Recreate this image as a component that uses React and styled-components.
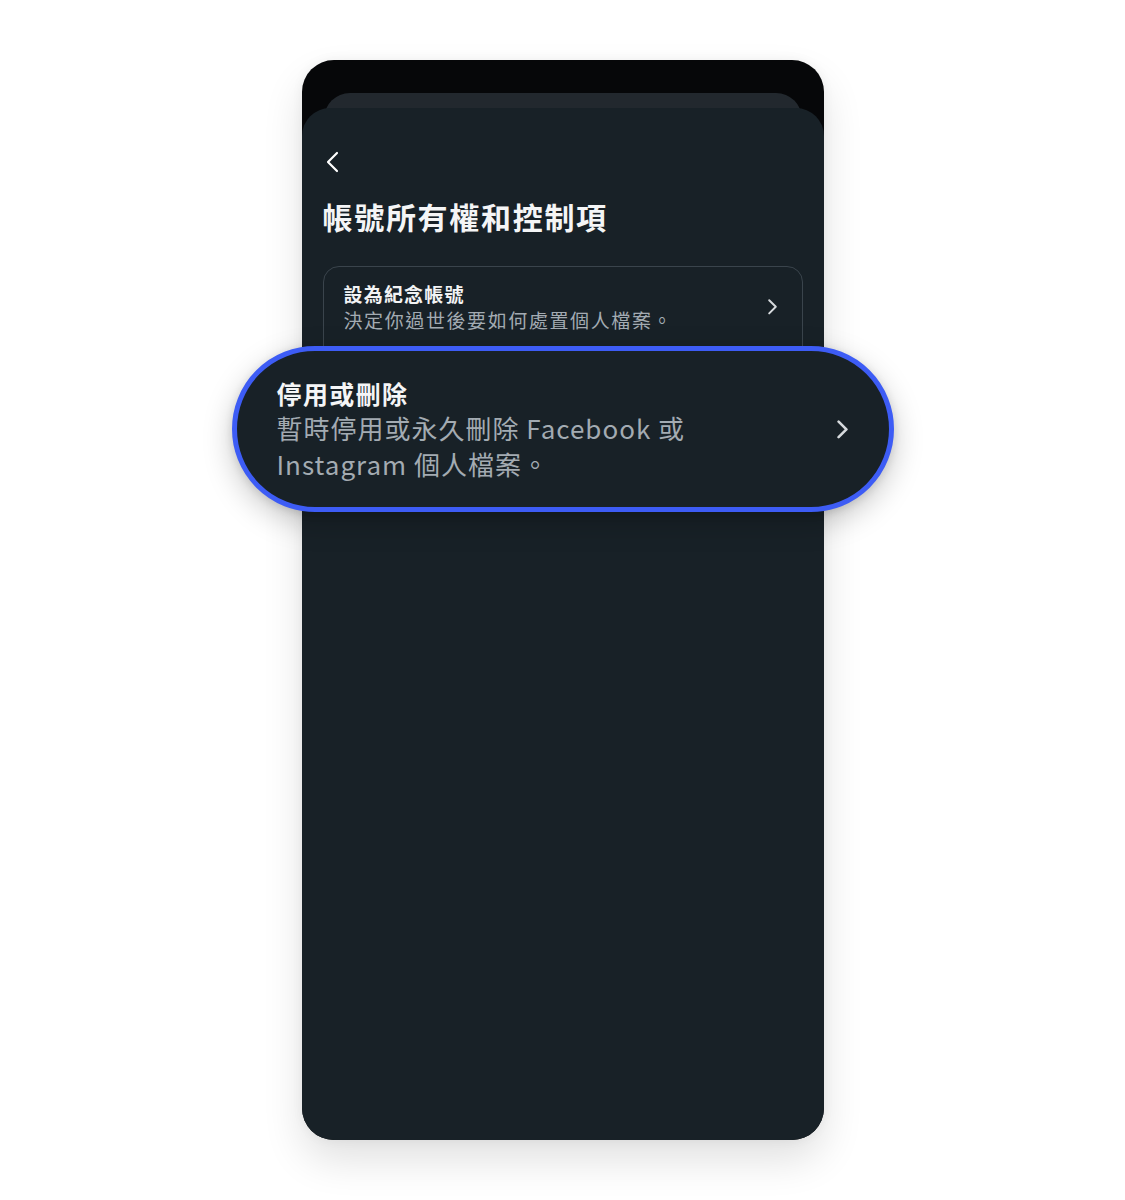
import React from "react";
import styled, { createGlobalStyle } from "styled-components";

const Global = createGlobalStyle`
  html, body { margin: 0; padding: 0; background: #ffffff; }
  body { font-family: "Noto Sans CJK TC", "Noto Sans", sans-serif; }
`;

const Page = styled.div`
  width: 1125px;
  height: 1200px;
  display: flex;
  justify-content: center;
  padding-top: 60px;
  box-sizing: border-box;
`;

const Stage = styled.div`
  position: relative;
  width: 522px;
  height: 1080px;
`;

const Phone = styled.div`
  width: 100%;
  height: 100%;
  background: #060709;
  border-radius: 32px;
  overflow: hidden;
  display: flex;
  flex-direction: column;
  padding-top: 33px;
  box-sizing: border-box;
  box-shadow: 0 20px 40px rgba(0, 0, 0, 0.12), 0 0 12px rgba(0, 0, 0, 0.05);
`;

const BackSheet = styled.div`
  margin: 0 22px;
  height: 40px;
  flex: none;
  background: #22282e;
  border-radius: 26px 26px 0 0;
`;

const Sheet = styled.div`
  margin-top: -25px;
  flex: 1;
  background: #182127;
  border-radius: 28px 28px 0 0;
  padding: 0 21px;
  display: flex;
  flex-direction: column;
`;

const BackButton = styled.div`
  margin-top: 43px;
  margin-left: 1px;
  width: 18px;
  height: 22px;
  display: flex;
  align-items: center;
  color: #ffffff;
`;

const Title = styled.h1`
  margin: 22px 0 0 0;
  font-size: 30px;
  line-height: 42px;
  font-weight: 700;
  color: #f4f5f6;
  letter-spacing: 1.7px;
`;

const Card = styled.div`
  margin-top: 29px;
  border: 1px solid #3a444c;
  border-radius: 16px;
  overflow: hidden;
`;

const Row = styled.div`
  display: flex;
  align-items: center;
  padding: 14px 24px 13px 20px;
  gap: 12px;
`;

const RowText = styled.div`
  flex: 1;
  display: flex;
  flex-direction: column;
`;

const RowTitle = styled.div`
  font-size: 19px;
  line-height: 26px;
  font-weight: 700;
  color: #f2f3f4;
  letter-spacing: 1.2px;
`;

const RowSub = styled.div`
  font-size: 19px;
  line-height: 26px;
  color: #a3abb2;
  letter-spacing: 1.6px;
`;

const Callout = styled.div`
  position: absolute;
  left: -70px;
  top: 286px;
  width: 662px;
  height: 166px;
  box-sizing: border-box;
  border: 5px solid #3d5cf5;
  border-radius: 83px;
  background: #182127;
  display: flex;
  align-items: center;
  padding: 0 40px 0 40px;
  gap: 16px;
  box-shadow: 0 10px 30px rgba(0, 0, 0, 0.22), 0 2px 8px rgba(0, 0, 0, 0.12);
`;

const CalloutText = styled.div`
  flex: 1;
  display: flex;
  flex-direction: column;
`;

const CalloutTitle = styled.div`
  font-size: 25px;
  line-height: 34px;
  font-weight: 700;
  color: #f4f5f6;
  letter-spacing: 1.4px;
`;

const CalloutSub = styled.div`
  font-size: 26px;
  line-height: 36px;
  color: #a3abb2;
  letter-spacing: 1px;
  max-width: 430px;
`;

const Chevron = ({ size = 12, stroke = 2 }) => (
  <svg width={size} height={size * 1.6} viewBox="0 0 10 16" fill="none">
    <path d="M2 2l6 6-6 6" stroke="#d6dadd" strokeWidth={stroke} strokeLinecap="round" strokeLinejoin="round" />
  </svg>
);

export default function App() {
  return (
    <>
      <Global />
      <Page>
        <Stage>
          <Phone>
            <BackSheet />
            <Sheet>
              <BackButton>
                <svg width="16" height="22" viewBox="0 0 16 22" fill="none">
                  <path d="M13 2L4 11l9 9" stroke="#ffffff" strokeWidth="2.2" strokeLinecap="round" strokeLinejoin="round" />
                </svg>
              </BackButton>
              <Title>帳號所有權和控制項</Title>
              <Card>
                <Row>
                  <RowText>
                    <RowTitle>設為紀念帳號</RowTitle>
                    <RowSub>決定你過世後要如何處置個人檔案。</RowSub>
                  </RowText>
                  <Chevron size={11} stroke={1.8} />
                </Row>
                <Row>
                  <RowText>
                    <RowTitle>停用或刪除</RowTitle>
                    <RowSub>暫時停用或永久刪除 Facebook 或 Instagram 個人檔案。</RowSub>
                  </RowText>
                  <Chevron size={11} stroke={1.8} />
                </Row>
              </Card>
            </Sheet>
          </Phone>
          <Callout>
            <CalloutText>
              <CalloutTitle>停用或刪除</CalloutTitle>
              <CalloutSub>暫時停用或永久刪除 Facebook 或 Instagram 個人檔案。</CalloutSub>
            </CalloutText>
            <Chevron size={13} stroke={2} />
          </Callout>
        </Stage>
      </Page>
    </>
  );
}
